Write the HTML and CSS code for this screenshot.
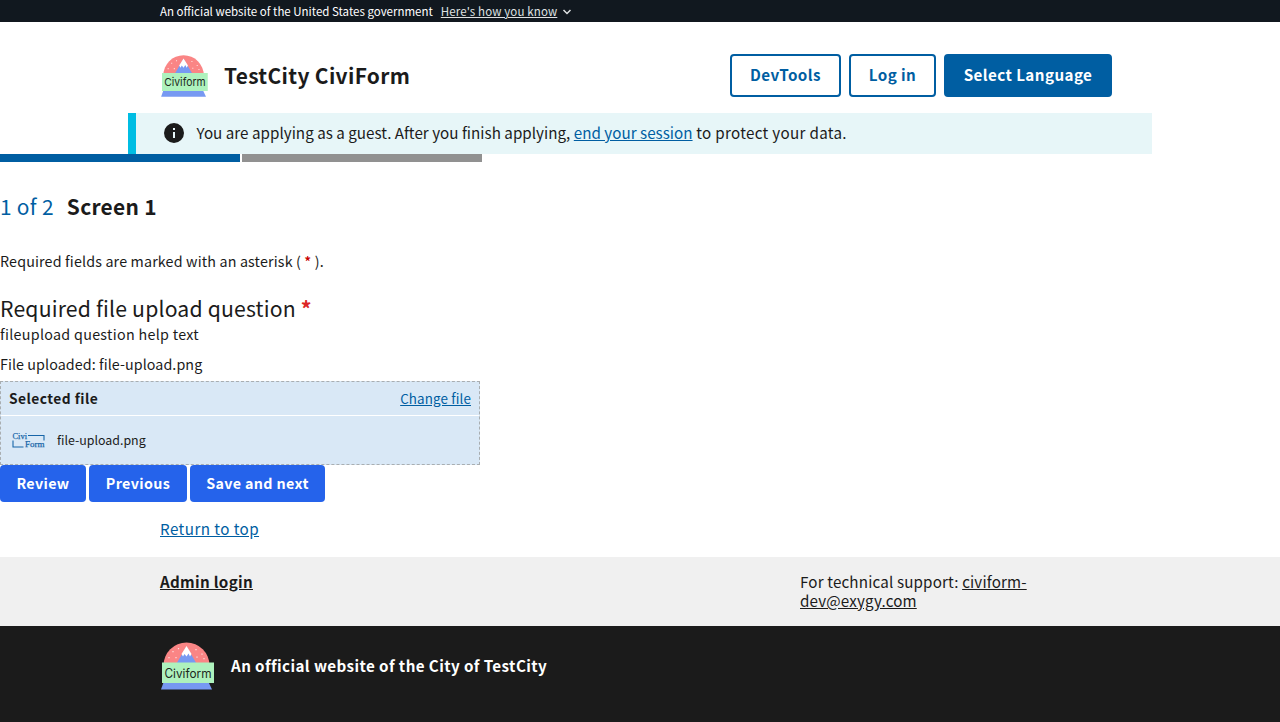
FILE: index.html
```
<!DOCTYPE html>
<html lang="en">
<head>
<meta charset="utf-8">
<title>TestCity CiviForm</title>
<link rel="stylesheet" href="styles.css">
</head>
<body>
<div class="banner"><div class="wrap banner-row">
  <span class="banner-text">An official website of the United States government</span>
  <a class="banner-link">Here's how you know</a>
  <svg class="chevron" viewBox="0 0 10 6"><path d="M1.500 1l3.500 3.500L8.500 1" fill="none" stroke="#dfe1e2" stroke-width="1.5"/></svg>
</div></div>
<header class="wrap header">
  <svg class="logo" viewBox="0 0 54 50">
    <g id="civiform-logo">
      <path d="M3.500 24.500a23 23 0 0 1 46 0z" fill="#fa8585"/>
      <path d="M16.500 22.500 26.500 5.500 36.500 22.500z" fill="#7799f2"/>
      <path d="M26.500 5 31.500 13 30 15.500 28.500 12.500 26.500 15.500 24.500 13 23 15.500 21.500 13z" fill="#fff"/>
      <path d="M18.500 7v1.200M13 10v1.200M9 16v1.200M16 16v1.200M36 8v1.200M42 12.500v1.200M37 15.500v1.200M44 17v1.200" stroke="#ffe0e0" stroke-width="1.200"/>
      <path d="M4 40h44l4 8.500H1z" fill="#7799f2"/>
      <path d="M2 21.500h52v20.500H2z" fill="#aef2bd"/>
      <text x="4.500" y="36.500" textLength="47" lengthAdjust="spacingAndGlyphs" font-family="Inter, sans-serif" font-size="12.5" fill="#202820">Civiform</text>
    </g>
  </svg>
  <span class="site-title">TestCity CiviForm</span>
  <nav class="nav">
    <a class="btn dev">DevTools</a>
    <a class="btn login">Log in</a>
    <a class="btn solid">Select Language</a>
  </nav>
</header>
<div class="alert">
  <svg class="info" viewBox="0 0 24 24"><path fill="#1b1b1b" fill-rule="evenodd" d="M12 2a10 10 0 1 0 0 20 10 10 0 0 0 0-20zm1 15h-2v-6h2v6zm0-8h-2V7h2v2z"/></svg>
  <p class="alert-text">You are applying as a guest. After you finish applying, <a class="link">end your session</a><span class="tail"> to protect your data.</span></p>
</div>
<main>
  <div class="steps"><i class="step current"></i><i class="step"></i></div>
  <h1 class="heading"><span class="count">1 of 2</span><span class="screen">Screen 1</span></h1>
  <p class="note">Required fields are marked with an asterisk ( <span class="red">*</span> ).</p>
  <h2 class="question">Required file upload question <b class="star">*</b></h2>
  <p class="help">fileupload question help text</p>
  <p class="uploaded">File uploaded: file-upload.png</p>
  <div class="file">
    <div class="file-head"><b class="selected">Selected file</b><a class="link change">Change file</a></div>
    <div class="file-body">
      <svg class="thumb" viewBox="0 0 34 18"><g fill="none" stroke="#1765a8" stroke-width="1.1"><path d="M17 4.500h16v5M2 9.500v6.500H12.500"/></g><g font-family="Liberation Serif, serif" font-size="9" fill="#1765a8" stroke="#1765a8" stroke-width=".25"><text x="1.500" y="8" textLength="14.500" lengthAdjust="spacingAndGlyphs">Civi</text><text x="14" y="15.800" textLength="19.500" lengthAdjust="spacingAndGlyphs">Form</text></g></svg>
      <span class="fname">file-upload.png</span>
    </div>
  </div>
  <div class="actions"><a class="act a1">Review</a><a class="act a2">Previous</a><a class="act a3">Save and next</a></div>
</main>
<div class="wrap top"><a class="link top-link">Return to top</a></div>
<footer>
  <div class="support"><div class="wrap support-row">
    <a class="admin">Admin login</a>
    <p class="contact">For technical support: <u>civiform-<br>dev@exygy.com</u></p>
  </div></div>
  <div class="identity"><div class="wrap identity-row">
    <svg class="logo-lg" viewBox="0 0 54 50"><use href="#civiform-logo"/></svg>
    <b class="official">An official website of the City of TestCity</b>
  </div></div>
</footer>
</body>
</html>
```
FILE: styles.css
```
* { box-sizing: border-box; }
body { margin: 0; color: #1b1b1b; background: #fff; font: 15.2px/20px "Noto Sans CJK SC", "Noto Sans", sans-serif; }
p, h1, h2 { margin: 0; font-weight: 400; }
span, a, b { white-space: nowrap; }
.wrap { width: 1024px; margin: 0 auto; padding: 0 32px; }
.link { color: #005ea2; text-decoration: underline; }
.banner { background: #11181f; height: 22px; color: #fff; font-size: 11.5px; line-height: 22px; }
.banner-row { display: flex; align-items: center; }
.banner-link { margin-left: 8px; color: #dfe1e2; letter-spacing: .13px; text-decoration: underline; }
.chevron { width: 10px; height: 6px; margin: 2px 0 0 5px; }
.header { display: flex; align-items: flex-start; height: 91px; padding-top: 32px; }
.logo { width: 48px; height: 44px; }
.site-title { margin-left: 16px; font-size: 20.9px; font-weight: 700; letter-spacing: .35px; line-height: 42px; }
.nav { display: flex; gap: 8px; margin: 0 8px 0 auto; }
.btn { height: 43px; border: 2px solid #005ea2; border-radius: 4px; color: #005ea2; font-weight: 700; letter-spacing: .42px; line-height: 37px; text-align: center; }
.dev { width: 111px; }
.login { width: 87px; }
.solid { width: 168px; background: #005ea2; color: #fff; }
.alert { display: flex; align-items: flex-start; width: 1024px; height: 41px; margin: 0 auto; padding-left: 26px; border-left: 8px solid #00bde3; background: #e7f6f8; }
.info { width: 24px; height: 24px; margin-top: 8px; }
.alert-text { margin-left: 10.5px; letter-spacing: .02px; line-height: 39px; }
.tail { letter-spacing: .3px; }
.steps { display: flex; gap: 2px; width: 482px; }
.step { flex: 1; height: 8px; background: #919191; }
.step.current { background: #005ea2; }
.heading { display: flex; margin-top: 28px; font-size: 20.9px; letter-spacing: .3px; line-height: 32px; }
.count { color: #005ea2; }
.screen { margin-left: 13px; font-weight: 700; }
.note { margin-top: 27px; font-size: 14.3px; letter-spacing: .15px; line-height: 24px; }
.red { color: #c80000; font-weight: 500; }
.question { margin-top: 19px; font-size: 21.2px; letter-spacing: .18px; line-height: 32px; }
.star { color: #dc2626; }
.help, .uploaded { font-size: 14.3px; line-height: 20px; }
.help { letter-spacing: .3px; }
.uploaded { margin-top: 10px; letter-spacing: .07px; }
.file { width: 480px; height: 84px; margin-top: 7px; border: 1px dashed #a9aeb1; background: #d9e8f6; font-size: 13.4px; }
.file-head { display: flex; justify-content: space-between; height: 34px; padding: 0 8px; border-bottom: 1px solid #fff; line-height: 32px; }
.selected { letter-spacing: .45px; font-size: 13.8px; }
.change { letter-spacing: .13px; }
.file-body { display: flex; align-items: center; height: 48px; padding-left: 10px; }
.thumb { width: 34px; height: 18px; }
.fname { margin-left: 12px; font-size: 12.4px; }
.actions { display: flex; gap: 3px; }
.act { height: 37px; border-radius: 4px; background: #2563eb; color: #fff; font-size: 14.3px; font-weight: 700; letter-spacing: .35px; line-height: 35px; text-align: center; }
.a1 { width: 86px; }
.a2 { width: 98px; }
.a3 { width: 135px; }
.top { height: 55px; padding-top: 16px; letter-spacing: .43px; }
.support { height: 69px; background: #f0f0f0; }
.support-row { display: flex; justify-content: space-between; padding-top: 15px; line-height: 19px; }
.admin { font-weight: 700; letter-spacing: .3px; text-decoration: underline; }
.contact { width: 320px; letter-spacing: .15px; }
.identity { height: 96px; background: #1b1b1b; color: #fff; }
.identity-row { display: flex; align-items: flex-start; padding-top: 15px; }
.logo-lg { width: 54px; height: 50px; }
.official { margin-left: 17px; letter-spacing: .4px; line-height: 48px; }
```
